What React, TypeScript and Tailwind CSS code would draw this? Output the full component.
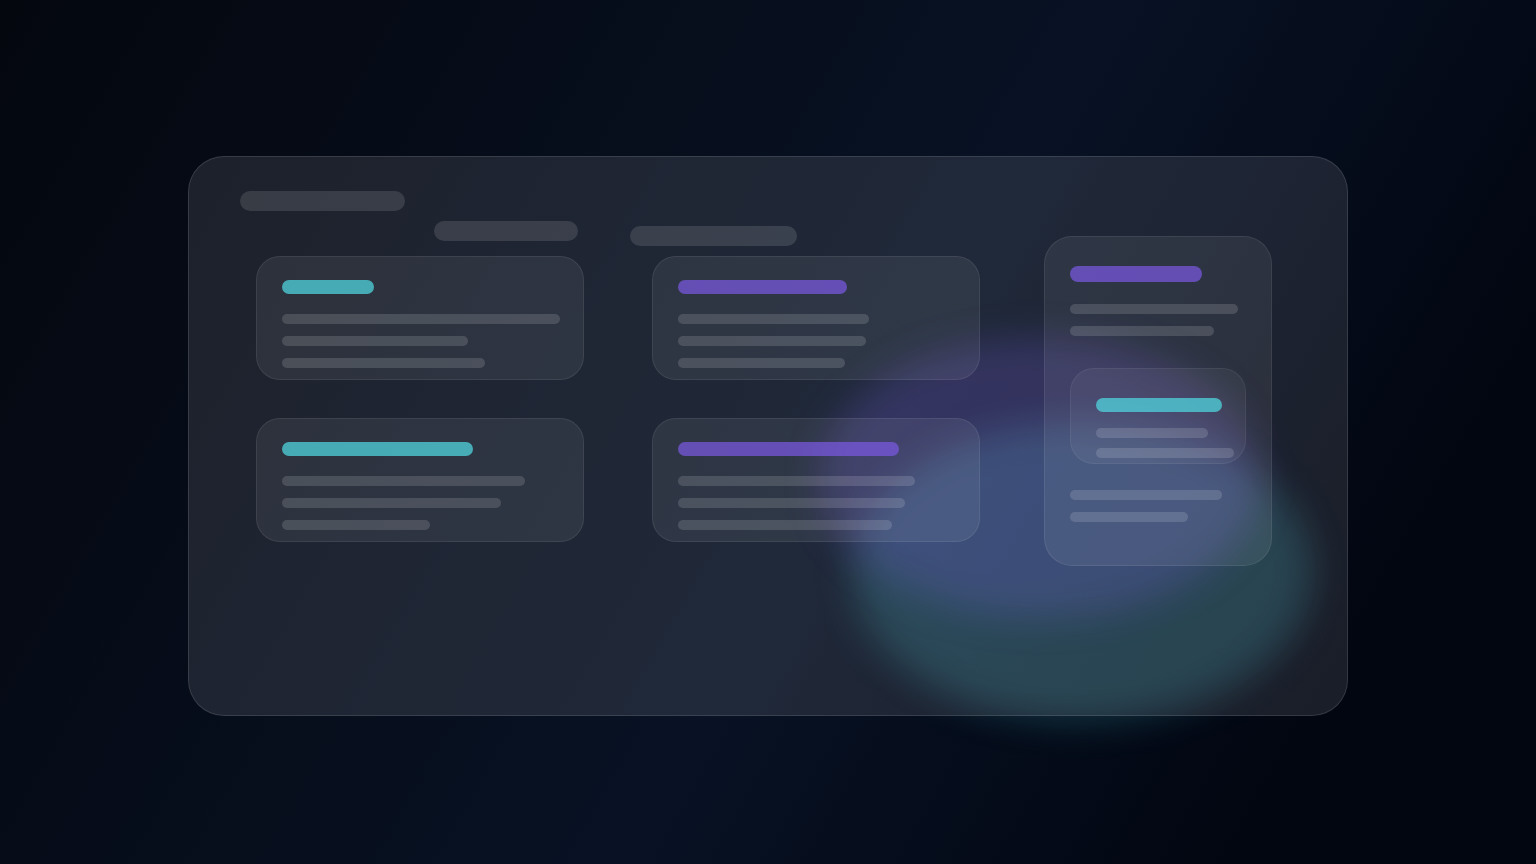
import { ReactNode } from 'react'
import { cva } from 'class-variance-authority'
import { twMerge } from 'tailwind-merge'

type Tone = 'teal' | 'violet' | 'line' | 'nav'

const bar = cva('block shrink-0', {
	variants: {
		tone: {
			teal: 'h-3.5 rounded-[7px] bg-[#50d4de]/75',
			violet: 'h-3.5 rounded-[7px] bg-[#7c5ae6]/70',
			line: 'h-2.5 rounded-[5px] bg-white/14',
			nav: 'h-5 rounded-[10px] bg-white/12',
		},
	},
})

const Bar = ({ tone, className }: { tone: Tone; className?: string }) => (
	<span className={twMerge(bar({ tone }), className)} />
)

interface CardProps {
	tone: Tone
	title: string
	lines: string[]
}

const cards: CardProps[] = [
	{ tone: 'teal', title: 'w-[92px]', lines: ['w-[278px]', 'w-[186px]', 'w-[203px]'] },
	{ tone: 'violet', title: 'w-[169px]', lines: ['w-[191px]', 'w-[188px]', 'w-[167px]'] },
	{ tone: 'teal', title: 'w-[191px]', lines: ['w-[243px]', 'w-[219px]', 'w-[148px]'] },
	{ tone: 'violet', title: 'w-[221px]', lines: ['w-[237px]', 'w-[227px]', 'w-[214px]'] },
]

const Lines = ({ widths, className }: { widths: string[]; className?: string }) => (
	<div className={twMerge('flex flex-col gap-3', className)}>
		{widths.map((width) => (
			<Bar key={width} tone="line" className={width} />
		))}
	</div>
)

const Glass = ({ children, className }: { children: ReactNode; className?: string }) => (
	<div className={twMerge('rounded-3xl border border-white/8 bg-white/7', className)}>{children}</div>
)

const Card = ({ tone, title, lines }: CardProps) => (
	<Glass className="h-[124px] pt-[23px] pl-[25px]">
		<Bar tone={tone} className={title} />
		<Lines widths={lines} className="mt-5" />
	</Glass>
)

// Soft light behind the glass
const Glow = () => (
	<div className="pointer-events-none absolute inset-0" aria-hidden="true">
		<div className="absolute left-[664px] top-[266px] h-[300px] w-[460px] rounded-[50%] bg-[#4dd0e1]/20 blur-[18px]" />
		<div className="absolute left-[632px] top-[182px] h-[280px] w-[440px] rounded-[50%] bg-[#7c5cff]/20 blur-[18px]" />
	</div>
)

export default function App() {
	return (
		<main className="min-h-screen overflow-hidden bg-[linear-gradient(120deg,#04070e_0%,#081224_55%,#020611_85%,#020611_100%)] px-6 pt-39 pb-37">
			<div className="relative mx-auto max-w-[1160px]">
				<Glow />

				<div className="relative flex min-h-[560px] items-start gap-16 rounded-[36px] border border-white/12 bg-[#f4f8ff]/10 pt-[34px] pr-[75px] pl-[51px]">
					<section className="min-w-0 flex-1">
						<nav className="flex items-start">
							<Bar tone="nav" className="w-[165px]" />
							<Bar tone="nav" className="mt-[30px] ml-[29px] w-36" />
							<Bar tone="nav" className="mt-[35px] ml-[52px] w-[167px]" />
						</nav>

						<div className="mt-2.5 grid grid-cols-2 gap-x-17 gap-y-[38px] pl-4">
							{cards.map((card) => (
								<Card key={card.title} {...card} />
							))}
						</div>
					</section>

					<aside className="mt-[45px] w-57 shrink-0">
						<Glass className="rounded-[28px] px-[25px] pt-[29px] pb-[43px]">
							<Bar tone="violet" className="h-4 w-[132px] rounded-lg" />
							<Lines widths={['w-[168px]', 'w-36']} className="mt-[22px]" />

							<Glass className="mt-8 h-24 border-white/6 bg-white/5 pt-[29px] pl-[25px]">
								<Bar tone="teal" className="w-[126px]" />
								<Lines widths={['w-28', 'w-[138px]']} className="mt-4 gap-2.5" />
							</Glass>

							<Lines widths={['w-[152px]', 'w-[118px]']} className="mt-[26px]" />
						</Glass>
					</aside>
				</div>
			</div>
		</main>
	)
}
